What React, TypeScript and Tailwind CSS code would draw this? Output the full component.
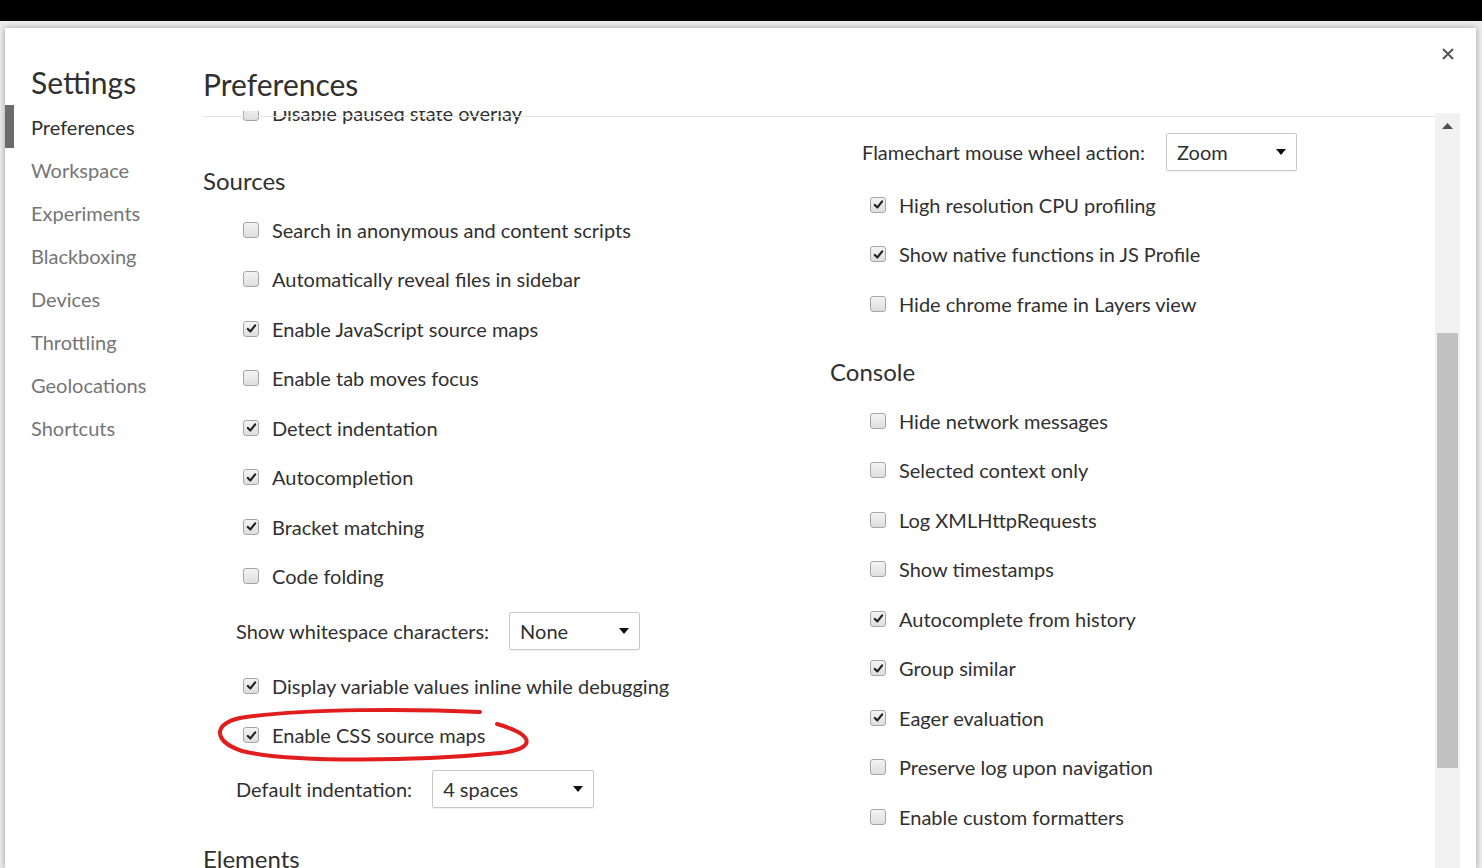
import React from 'react';

const font = { fontFamily: 'Lato, "Open Sans", sans-serif' };

const navItems = [
  'Preferences',
  'Workspace',
  'Experiments',
  'Blackboxing',
  'Devices',
  'Throttling',
  'Geolocations',
  'Shortcuts',
];

function Checkbox({ checked }: { checked: boolean }) {
  return (
    <span className="w-4 h-4 shrink-0 rounded-[3px] border border-[#a6a6a6] bg-gradient-to-b from-[#f4f4f4] to-[#dedede] flex items-center justify-center">
      {checked && (
        <svg width="11" height="11" viewBox="0 0 12 12">
          <path d="M2 6.5 L4.8 9.2 L10 2.6" fill="none" stroke="#222" strokeWidth="2.4" strokeLinecap="round" strokeLinejoin="round" />
        </svg>
      )}
    </span>
  );
}

function CheckRow({ label, checked = false }: { label: string; checked?: boolean }) {
  return (
    <div className="h-[49.5px] shrink-0 flex items-center pl-[40px] gap-[13px]">
      <Checkbox checked={checked} />
      <span className="text-[20px] text-[#303030] whitespace-nowrap">{label}</span>
    </div>
  );
}

function Select({ value, width }: { value: string; width: string }) {
  return (
    <div
      className={`${width} h-[38px] shrink-0 border border-[#c9c9c9] rounded-[2px] bg-white shadow-[0_1px_1px_rgba(0,0,0,0.06)] flex items-center justify-between pl-[10px] pr-[10px]`}
    >
      <span className="text-[20px] text-[#303030]">{value}</span>
      <svg width="10" height="6" viewBox="0 0 10 6">
        <path d="M0 0 L10 0 L5 6 Z" fill="#111" />
      </svg>
    </div>
  );
}

function Heading({ children }: { children: React.ReactNode }) {
  return (
    <div className="h-[67.5px] pt-[27px] shrink-0">
      <div className="text-[24px] leading-[32px] text-[#303030]">{children}</div>
    </div>
  );
}

export default function App() {
  return (
    <div className="w-[1482px] h-[868px] bg-[#ececec] overflow-hidden flex flex-col relative" style={font}>
      <div className="h-[21px] bg-black shrink-0" />
      <div className="flex-1 flex pl-[5px] pr-[6px] pt-[7px] min-h-0">
        <div className="flex-1 bg-white shadow-[0_0_6px_rgba(0,0,0,0.35)] flex relative min-h-0">
          {/* sidebar */}
          <div className="w-[198px] shrink-0 flex flex-col">
            <div className="pt-[34px] pl-[26px] h-[77px]">
              <div className="text-[30px] leading-[40px] text-[#303030]">Settings</div>
            </div>
            <div className="flex flex-col">
              {navItems.map((item, i) => (
                <div key={item} className="h-[43px] flex items-center relative">
                  {i === 0 && <div className="absolute left-0 top-0 bottom-0 w-[9px] bg-[#6b6b6b]" />}
                  <span className={`pl-[26px] text-[20px] ${i === 0 ? 'text-[#303030]' : 'text-[#757575]'}`}>
                    {item}
                  </span>
                </div>
              ))}
            </div>
          </div>

          {/* main */}
          <div className="flex-1 flex flex-col min-w-0 relative">
            <div className="h-[83px] pt-[36px] shrink-0 pr-[41px]">
              <div className="text-[30px] leading-[40px] text-[#303030]">Preferences</div>
            </div>
            {/* header divider, drawn over the scrolled content */}
            <div className="absolute left-0 right-[41px] top-[88px] h-px bg-[#e4e4e4] z-10" />
            <div className="flex-1 flex min-h-0 pr-[16px]">
              <div className="flex-1 overflow-hidden flex">
                {/* left column */}
                <div className="w-[627px] shrink-0 flex flex-col mt-[-23px]">
                  <CheckRow label="Disable paused state overlay" />
                  <Heading>Sources</Heading>
                  <CheckRow label="Search in anonymous and content scripts" />
                  <CheckRow label="Automatically reveal files in sidebar" />
                  <CheckRow label="Enable JavaScript source maps" checked />
                  <CheckRow label="Enable tab moves focus" />
                  <CheckRow label="Detect indentation" checked />
                  <CheckRow label="Autocompletion" checked />
                  <CheckRow label="Bracket matching" checked />
                  <CheckRow label="Code folding" />
                  <div className="h-[60px] flex items-center pl-[33px] gap-[20px] shrink-0">
                    <span className="text-[20px] text-[#303030]">Show whitespace characters:</span>
                    <Select value="None" width="w-[131px]" />
                  </div>
                  <CheckRow label="Display variable values inline while debugging" checked />
                  <CheckRow label="Enable CSS source maps" checked />
                  <div className="h-[58px] flex items-center pl-[33px] gap-[20px] shrink-0">
                    <span className="text-[20px] text-[#303030]">Default indentation:</span>
                    <Select value="4 spaces" width="w-[162px]" />
                  </div>
                  <div className="pt-[25px] shrink-0">
                    <div className="text-[24px] leading-[32px] text-[#303030]">Elements</div>
                  </div>
                </div>

                {/* right column */}
                <div className="flex-1 flex flex-col pt-[16px]">
                  <div className="h-[50px] flex items-center pl-[32px] gap-[21px] shrink-0">
                    <span className="text-[20px] text-[#303030]">Flamechart mouse wheel action:</span>
                    <Select value="Zoom" width="w-[131px]" />
                  </div>
                  <div className="h-[3px] shrink-0" />
                  <CheckRow label="High resolution CPU profiling" checked />
                  <CheckRow label="Show native functions in JS Profile" checked />
                  <CheckRow label="Hide chrome frame in Layers view" />
                  <Heading>Console</Heading>
                  <CheckRow label="Hide network messages" />
                  <CheckRow label="Selected context only" />
                  <CheckRow label="Log XMLHttpRequests" />
                  <CheckRow label="Show timestamps" />
                  <CheckRow label="Autocomplete from history" checked />
                  <CheckRow label="Group similar" checked />
                  <CheckRow label="Eager evaluation" checked />
                  <CheckRow label="Preserve log upon navigation" />
                  <CheckRow label="Enable custom formatters" />
                </div>
              </div>

              {/* scrollbar */}
              <div className="w-[25px] shrink-0 bg-[#f1f1f1] mt-[2px] flex flex-col items-center">
                <div className="h-[26px] flex items-center justify-center">
                  <svg width="11" height="6" viewBox="0 0 11 6">
                    <path d="M0 6 L5.5 0 L11 6 Z" fill="#505050" />
                  </svg>
                </div>
                <div className="mt-[194px] w-[21px] h-[435px] bg-[#c1c1c1]" />
              </div>
            </div>
          </div>

          {/* close */}
          <div className="absolute right-[21px] top-[19px] w-[14px] h-[14px]">
            <svg width="14" height="14" viewBox="0 0 14 14">
              <path d="M2 2 L12 12 M12 2 L2 12" stroke="#555" strokeWidth="2" />
            </svg>
          </div>
        </div>
      </div>

      {/* hand-drawn annotation */}
      <svg className="absolute inset-0 pointer-events-none" width="1482" height="868">
        <path
          d="M480 712 C 420 709, 300 708, 240 718 C 212 724, 214 742, 242 751 C 292 763, 420 761, 500 753 C 536 749, 536 735, 497 724"
          fill="none"
          stroke="#e11d1d"
          strokeWidth="4"
          strokeLinecap="round"
        />
      </svg>
    </div>
  );
}
